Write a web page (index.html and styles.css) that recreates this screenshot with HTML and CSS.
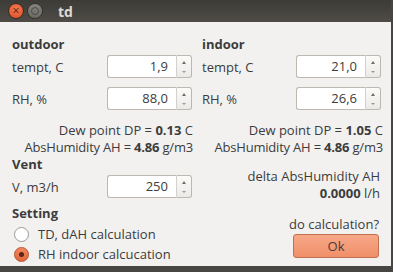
FILE: index.html
```html
<!DOCTYPE html>
<html lang="en">
<head>
    <meta charset="UTF-8">
    <title>td</title>
    <link rel="stylesheet" href="styles.css">
</head>
<body>
    <div class="window">
        <!-- Title bar -->
        <div class="titlebar">
            <span class="wbtn close">&#215;</span>
            <span class="wbtn mini"><span class="ring"></span></span>
            <span class="title">td</span>
        </div>

        <div class="content">
            <!-- outdoor -->
            <div class="col left">
                <h2>outdoor</h2>
                <div class="row first">
                    <span class="label">tempt, C</span>
                    <div class="spin">
                        <div class="spin-field">1,9</div>
                        <div class="spin-btns"><span class="up"></span><span class="down"></span></div>
                    </div>
                </div>
                <div class="row">
                    <span class="label">RH, %</span>
                    <div class="spin">
                        <div class="spin-field">88,0</div>
                        <div class="spin-btns"><span class="up"></span><span class="down"></span></div>
                    </div>
                </div>
                <div class="info">
                    <p>Dew point DP = <b>0.13</b> C</p>
                    <p class="ah">AbsHumidity AH = <b>4.86</b> g/m3</p>
                </div>
                <h2 class="vent-title">Vent</h2>
                <div class="row vent">
                    <span class="label">V, m3/h</span>
                    <div class="spin">
                        <div class="spin-field">250</div>
                        <div class="spin-btns"><span class="up"></span><span class="down"></span></div>
                    </div>
                </div>
                <h2 class="setting">Setting</h2>
                <label class="radio"><span class="dot"></span>TD, dAH calculation</label>
                <label class="radio checked"><span class="dot"></span>RH indoor calcucation</label>
            </div>

            <!-- indoor -->
            <div class="col right">
                <h2>indoor</h2>
                <div class="row first">
                    <span class="label">tempt, C</span>
                    <div class="spin">
                        <div class="spin-field">21,0</div>
                        <div class="spin-btns"><span class="up"></span><span class="down"></span></div>
                    </div>
                </div>
                <div class="row">
                    <span class="label">RH, %</span>
                    <div class="spin">
                        <div class="spin-field">26,6</div>
                        <div class="spin-btns"><span class="up"></span><span class="down"></span></div>
                    </div>
                </div>
                <div class="info">
                    <p>Dew point DP = <b>1.05</b> C</p>
                    <p class="ah">AbsHumidity AH = <b>4.86</b> g/m3</p>
                </div>
                <div class="delta">
                    <p>delta AbsHumidity AH</p>
                    <p><b>0.0000</b> l/h</p>
                </div>
                <p class="ask">do calculation?</p>
                <button class="ok">Ok</button>
            </div>
        </div>
    </div>
</body>
</html>
```

FILE: styles.css
```css
body {
    margin: 0;
    padding: 0;
    background-color: #474642;
    font-family: "Open Sans", "DejaVu Sans", sans-serif;
    font-size: 13px;
    color: #3c3c3c;
}
p {
    margin: 0;
}
.window {
    width: 391px;
    height: 266px;
    background-color: #f2f1f0;
    overflow: hidden;
}
.titlebar {
    height: 22px;
    background: linear-gradient(#3c3b37, #4f4c47);
    display: flex;
    align-items: center;
    padding-left: 8px;
}
.wbtn {
    width: 14px;
    height: 14px;
    border-radius: 50%;
    display: flex;
    align-items: center;
    justify-content: center;
    margin-right: 3px;
}
.wbtn.close {
    background: radial-gradient(circle at 50% 35%, #f37b53, #df4a22);
    border: 1px solid #3a2a22;
    color: #4a1a0c;
    font-size: 12px;
    line-height: 14px;
}
.wbtn.mini {
    background: linear-gradient(#85837e, #6c6a65);
    border: 1px solid #35342f;
}
.wbtn.mini .ring {
    width: 6px;
    height: 6px;
    border: 1px solid #4e4c48;
    border-radius: 50%;
}
.title {
    margin-left: 12px;
    color: #dfdbd2;
    font-weight: bold;
    font-size: 14px;
}
.content {
    display: flex;
    padding: 13px 8px 0 12px;
    gap: 10px;
}
.col {
    display: flex;
    flex-direction: column;
}
.col.left {
    width: 180px;
}
.col.right {
    width: 181px;
}
h2 {
    margin: 0;
    font-size: 13px;
    font-weight: bold;
    line-height: 18px;
    height: 18px;
}
.row {
    display: flex;
    justify-content: space-between;
    align-items: center;
    height: 23px;
    margin-top: 9px;
}
.row.first {
    margin-top: 2px;
}
.right .row {
    padding-right: 2px;
}
.spin {
    display: flex;
    width: 85px;
    height: 23px;
}
.spin-field {
    flex: 1;
    background-color: #ffffff;
    border: 1px solid #bcb8b2;
    border-right: 1px solid #d4d1cc;
    border-radius: 3px 0 0 3px;
    text-align: right;
    padding-right: 8px;
    line-height: 21px;
}
.spin-btns {
    width: 14px;
    border: 1px solid #bcb8b2;
    border-left: none;
    border-radius: 0 3px 3px 0;
    background: linear-gradient(#fbfbfa, #eceae8);
    display: flex;
    flex-direction: column;
    align-items: center;
    justify-content: space-between;
    padding: 5px 0 4px;
}
.spin-btns span {
    width: 0;
    height: 0;
    border-left: 2px solid transparent;
    border-right: 2px solid transparent;
}
.spin-btns .up {
    border-bottom: 3px solid #6e6d6a;
}
.spin-btns .down {
    border-top: 2px solid #9a9893;
}
.info {
    margin-top: 12px;
    text-align: right;
    line-height: 17px;
}
.info .ah {
    letter-spacing: -0.2px;
}
.left .info {
    margin-right: -1px;
}
h2.vent-title {
    height: 16px;
    line-height: 16px;
}
.row.vent {
    margin-top: 3px;
}
h2.setting {
    margin-top: 7px;
    height: 16px;
    line-height: 16px;
}
.radio {
    display: flex;
    align-items: center;
    height: 20px;
    padding-left: 2px;
}
.radio:first-of-type {
    margin-top: 3px;
}
.radio .dot {
    width: 13px;
    height: 13px;
    border: 1px solid #9c9a96;
    border-radius: 50%;
    background: #ffffff;
    margin-right: 9px;
    display: flex;
    align-items: center;
    justify-content: center;
}
.radio.checked .dot {
    background: linear-gradient(#f48a60, #e2643a);
    border-color: #b9502c;
}
.radio.checked .dot::after {
    content: "";
    width: 5px;
    height: 5px;
    border-radius: 50%;
    background: #5a2416;
}
.delta {
    margin-top: 12px;
    text-align: right;
    line-height: 17px;
    padding-right: 3px;
}
.ask {
    margin-top: 14px;
    text-align: right;
    line-height: 16px;
    padding-right: 4px;
}
.ok {
    align-self: flex-end;
    margin: 2px 4px 0 0;
    width: 86px;
    height: 24px;
    border: 1px solid #c2714f;
    border-radius: 3px;
    background: linear-gradient(#f7a888, #f08f6a);
    font-family: "Open Sans", "DejaVu Sans", sans-serif;
    font-size: 13px;
    color: #4a3b35;
    padding: 0;
}
```
